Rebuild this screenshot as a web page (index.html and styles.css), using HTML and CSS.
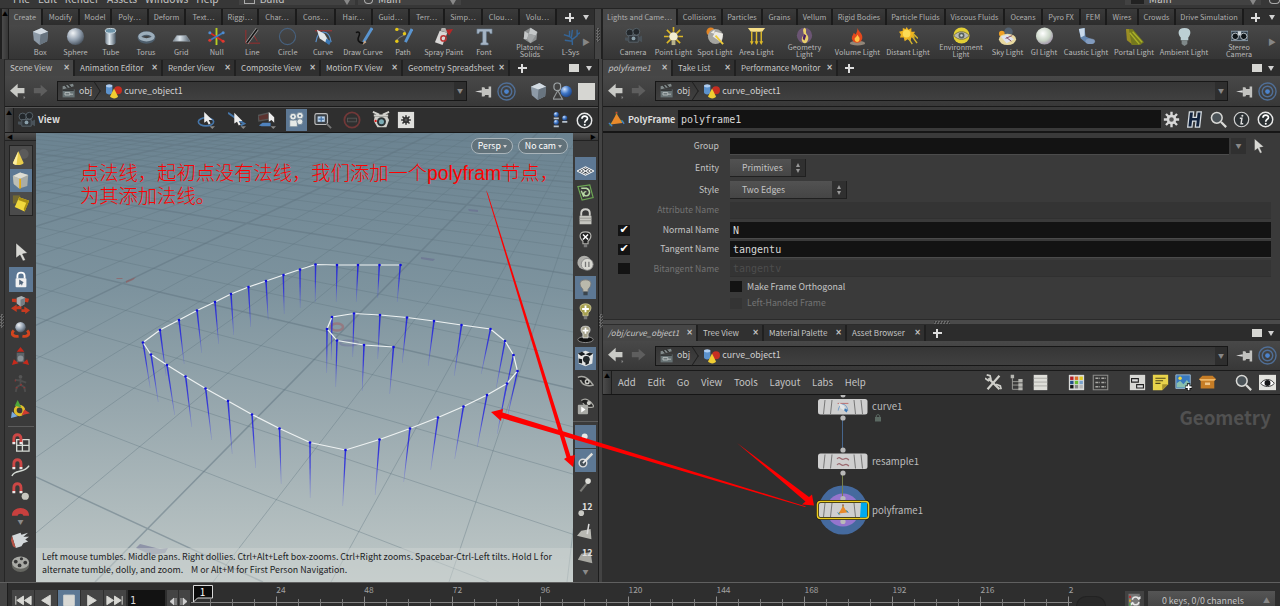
FILE: index.html
```html
<!DOCTYPE html>
<html lang="en">
<head>
<meta charset="utf-8">
<title>Houdini</title>
<link rel="stylesheet" href="styles.css">
</head>
<body>
<svg class="sprite" width="0" height="0">
  <defs>
    <radialGradient id="ball" cx=".35" cy=".3" r=".8"><stop offset="0" stop-color="#f0f3f6"/><stop offset=".5" stop-color="#96a3b2"/><stop offset="1" stop-color="#3c4651"/></radialGradient>
    <linearGradient id="tubeg"><stop offset="0" stop-color="#76838f"/><stop offset=".4" stop-color="#dfe8ee"/><stop offset="1" stop-color="#4d5b68"/></linearGradient>
    <radialGradient id="pearl" cx=".4" cy=".35" r=".7"><stop offset="0" stop-color="#fff"/><stop offset=".6" stop-color="#c9d4c6"/><stop offset="1" stop-color="#9c8fa6"/></radialGradient>
    <radialGradient id="blueball" cx=".35" cy=".3" r=".8"><stop offset="0" stop-color="#cfe3ff"/><stop offset=".5" stop-color="#3d74c4"/><stop offset="1" stop-color="#173a78"/></radialGradient>
    <linearGradient id="fade" x1="0" y1="0" x2="0" y2="1"><stop offset="0" stop-color="#1414e0"/><stop offset=".45" stop-color="#2a2ae0"/><stop offset="1" stop-color="#3c3cf0" stop-opacity=".2"/></linearGradient>
    <marker id="pt" markerWidth="4" markerHeight="4" refX="2" refY="2" markerUnits="userSpaceOnUse"><circle cx="2" cy="2" r="1.350" fill="#1010d8"/></marker>
  </defs>
  <symbol id="box" viewBox="0 0 20 20"><path d="M2 5 11 1l7 4-1 10-8 4-6-5z" fill="#8d9aa7"/><path d="M2 5 11 1l7 4-8 3z" fill="#d3dbe2"/><path d="M10 8l8-3-1 10-8 4z" fill="#68747f"/></symbol>
  <symbol id="sphere" viewBox="0 0 20 20"><circle cx="10" cy="10" r="9" fill="url(#ball)"/></symbol>
  <symbol id="tube" viewBox="0 0 20 20"><path d="M4.500 4v12c0 4 11 4 11 0V4z" fill="url(#tubeg)"/><ellipse cx="10" cy="4" rx="5.500" ry="2.500" fill="#6d93a8" stroke="#d0dbe2"/></symbol>
  <symbol id="torus" viewBox="0 0 20 20"><ellipse cx="10" cy="11" rx="7" ry="4" fill="none" stroke="#4d5d6b" stroke-width="5"/><ellipse cx="10" cy="10" rx="7" ry="3.500" fill="none" stroke="#9daebb" stroke-width="3.500"/></symbol>
  <symbol id="grid" viewBox="0 0 20 20"><path d="M5 9h10l4 6H1z" fill="url(#tubeg)" stroke="#9aa4ad" stroke-width=".5"/></symbol>
  <symbol id="null" viewBox="0 0 20 20"><path d="M10 1v18" stroke="#b8cc22" stroke-width="2"/><path d="M3 6 17 15" stroke="#d42a22" stroke-width="1.800"/><path d="M17 6 3 14" stroke="#3d7cc4" stroke-width="1.800"/><circle cx="3" cy="6" r="1.600" fill="#4f8cd0"/><circle cx="17" cy="6" r="1.600" fill="#4f8cd0"/><circle cx="3" cy="14" r="1.600" fill="#e03a30"/><circle cx="17" cy="15" r="1.600" fill="#e03a30"/></symbol>
  <symbol id="line" viewBox="0 0 20 20"><path d="M3 3v14M3 17h15M11 8l4 7" stroke="#9e2b2b" fill="none"/><path d="M4 17 15 2" stroke="#9b9b9b" stroke-width="3.500"/><path d="M4 17 15 2" stroke="#151515" stroke-width="1.800"/></symbol>
  <symbol id="circle" viewBox="0 0 20 20"><circle cx="10" cy="10" r="8.500" fill="none" stroke="#47617e" stroke-width="1.200"/></symbol>
  <symbol id="curve" viewBox="0 0 20 20"><path d="M1 4h18" stroke="#b03030"/><path d="M2 16C4 2 16 2 18 16" fill="none" stroke="#5a8fc8" stroke-width="1.300"/><path d="M3 3l8 4 4 7-3 2-6-4z" fill="#e3e6e8"/><path d="M13 12l5 3-2 4-4-3z" fill="#3b77b3"/></symbol>
  <symbol id="drawcurve" viewBox="0 0 20 20"><path d="M2 6c3-2 5 0 3 4s0 7 6 7" fill="none" stroke="#101010" stroke-width="1.600"/><path d="M19 1 10 16" stroke="#5a95d0" stroke-width="3"/><path d="M11 14l-2 5 4-3z" fill="#c9a98a"/></symbol>
  <symbol id="path" viewBox="0 0 20 20"><path d="M3 2c6 0 9 2 9 5S4 9 3 15" fill="none" stroke="#777" stroke-width="1.200"/><path d="M19 2 12 16" stroke="#5a95d0" stroke-width="3"/><circle cx="3" cy="2.500" r="1.800" fill="#e6c817"/><circle cx="11" cy="7" r="1.800" fill="#e6c817"/><circle cx="3" cy="15" r="1.800" fill="#e6c817"/></symbol>
  <symbol id="spray" viewBox="0 0 20 20"><path d="M12 3l8-1-4 7z" fill="#b52626"/><path d="M6 4l8 2-5 13-8-3z" fill="#d9d7d6"/><circle cx="10" cy="12" r="2.800" fill="none" stroke="#b33" stroke-width="1.600"/><path d="M8 1h4l2 5-7-2z" fill="#b5b3b1"/></symbol>
  <symbol id="font" viewBox="0 0 20 20"><path d="M2 2h16v5h-2l-1-2h-3v11l2 1v2H6v-2l2-1V5H5L4 7H2z" fill="#a5b4c4" stroke="#5e6f82" stroke-width=".6"/></symbol>
  <symbol id="platonic" viewBox="0 0 20 20"><path d="M10 1l8 5-1 9-7 4-8-5 1-9z" fill="#8c8f90"/><path d="M10 1l-2 7 8 2 2-4zM3 5l5 3-2 6-4 0z" fill="#c4c7c8"/><path d="M8 8l8 2-6 9-4-5z" fill="#a3a6a7"/></symbol>
  <symbol id="lsys" viewBox="0 0 20 20"><path d="M12 19c0-6 0-7-3-9L3 8m6 2V4m3 9 5-4V3m0 5 3-2M12 15l-8-1M11 11l1-8" fill="none" stroke="#356597" stroke-width="1.500"/></symbol>
  <symbol id="cam" viewBox="0 0 20 20"><circle cx="6" cy="6" r="3.800" fill="#22272b" stroke="#59636a"/><circle cx="13" cy="5" r="3.600" fill="#22272b" stroke="#59636a"/><path d="M5 9h10v7H5z" fill="#30363b" stroke="#59636a"/><path d="M15 11l4-2v7l-4-2zM5 11H1v3l4 1z" fill="#495259"/><circle cx="10" cy="12" r="2" fill="#8ba0aa"/></symbol>
  <symbol id="pointlight" viewBox="0 0 20 20"><path d="M10 0v5M0 10h5M15 10h5M3 3l4 4M17 3l-4 4M3 17l4-4M17 17l-4-4" stroke="#dcb828" stroke-width="1.700"/><circle cx="10" cy="10" r="4.500" fill="#f3efcf"/><path d="M8 14h4v5H8z" fill="#b9b38b"/></symbol>
  <symbol id="spotlight" viewBox="0 0 20 20"><circle cx="5" cy="5" r="4.500" fill="#e58523"/><circle cx="10" cy="10" r="8" fill="#a5a5a0"/><path d="M10 5l8 2-2 9-9-6zM5 6l4-3 0 4z" fill="#eceae4"/><path d="M10 9l8 9" stroke="#efcd3c" stroke-width="2"/></symbol>
  <symbol id="arealight" viewBox="0 0 20 20"><path d="M1 1h18l-3 4H4z" fill="#f7df87"/><path d="M5 5v12M10 5v13M15 5v12" stroke="#dcb828" stroke-width="1.500"/><path d="M3 15h4l-2 4zM8 15h4l-2 4zM13 15h4l-2 4z" fill="#dcb828"/></symbol>
  <symbol id="geolight" viewBox="0 0 20 20"><circle cx="10" cy="10" r="9" fill="#6b5574"/><path d="M10 1c4 2 0 5 3 8s1 9-2 10-6-4-3-8-2-7 2-10z" fill="#e9cf6a"/><path d="M9 8l3 2-2 6-2-2z" fill="#4b1f66"/></symbol>
  <symbol id="fire" viewBox="0 0 20 20"><ellipse cx="10" cy="17" rx="8" ry="2.500" fill="#c9b6a0" opacity=".6"/><path d="M10 1c1 4 6 6 5 11-1 6-10 6-11 0 0-3 2-4 2-6l2 2c1-2 2-4 2-7z" fill="#e4491d"/><path d="M10 8c1 3 3 3 2 6-1 3-5 2-5-1 0-2 2-2 3-5z" fill="#ffc246"/></symbol>
  <symbol id="distant" viewBox="0 0 20 20"><path d="M8 0l2 3 3-2 0 4 4 0-2 3 2 3-4 0-1 4-3-2-3 2-1-4-4 0 1-3-2-3 4-1 0-3 3 1z" fill="#eeb421"/><circle cx="8" cy="7" r="4" fill="#fbdc55"/><path d="M10 12l4 6M14 10l5 7M15 7l5 5" stroke="#d3b32c" stroke-width="1.500"/></symbol>
  <symbol id="env" viewBox="0 0 20 20"><circle cx="10" cy="10" r="9.500" fill="#e3cf35"/><path d="M1 10c5-6 13-6 18 0-5 6-13 6-18 0z" fill="#b9b9b2" stroke="#6e6a45"/><circle cx="10" cy="10" r="3.500" fill="#56605c"/><circle cx="10" cy="10" r="1.500" fill="#ced6d8"/></symbol>
  <symbol id="sky" viewBox="0 0 20 20"><circle cx="11" cy="5" r="4.500" fill="#53606e"/><circle cx="4" cy="7" r="3" fill="#f0a024"/><ellipse cx="10" cy="13" rx="9" ry="6" fill="#e8d9a0"/><path d="M3 10l7-2 7 5-8 4z" fill="#dfe3ee"/><path d="M8 12l7-3M9 11l5 4" stroke="#7f4860"/></symbol>
  <symbol id="gi" viewBox="0 0 20 20"><circle cx="10" cy="9.500" r="9" fill="url(#pearl)"/></symbol>
  <symbol id="caustic" viewBox="0 0 20 20"><path d="M2 2l6-1 1 9 9 4c2 4-4 5-8 3l-6-5z" fill="#6587b0"/><path d="M2 2l6-1 0 8-4 2z" fill="#c8d9ea"/><ellipse cx="14" cy="15" rx="5" ry="3" fill="#8fa5c6" opacity=".7"/></symbol>
  <symbol id="portal" viewBox="0 0 20 20"><path d="M1 2l7 0 12 14-4 3H7z" fill="#74781e"/><path d="M1 2l3 0 3 16-5-4z" fill="#9a8d24"/><path d="M8 5l10 11M5 6l10 12" stroke="#a8b029" stroke-width="1.500"/></symbol>
  <symbol id="bulb" viewBox="0 0 20 20"><path d="M10 1c8 0 7 7 4 10v3H6v-3C3 8 2 1 10 1z" fill="#bccfd3"/><path d="M7 14h6v4l-3 2-3-2z" fill="#7f8889"/></symbol>
  <symbol id="stereo" viewBox="0 0 20 20"><path d="M0 5h20v11H0z" fill="#2e3c48" stroke="#92a4b4"/><path d="M8 5h4v5H8z" fill="#ccd4da"/><circle cx="5" cy="11" r="3.800" fill="#0f1418" stroke="#cfd6dc"/><circle cx="15" cy="11" r="3.800" fill="#0f1418" stroke="#cfd6dc"/></symbol>

  <symbol id="back" viewBox="0 0 20 20"><path d="M0 9 9 1v5h8v6H9v5z" fill="#c9cac6"/><path d="M16 15l2 2-2 2z" fill="#888"/></symbol>
  <symbol id="fwd" viewBox="0 0 20 20"><path d="M17 9 9 2v4H1v6h8v4z" fill="#5e5e5e"/></symbol>
  <symbol id="clap" viewBox="0 0 20 20"><path d="M2 8h15v10H2z" fill="#677274"/><path d="M2 4l13-3 1 3L2 8z" fill="#80898a"/><path d="M5 3l3 3M9 2l3 3M2 9h14" stroke="#252525" stroke-width="1.500"/><path d="M5 12h6v3H5zM11 14h4" stroke="#c3c9c9" fill="none"/></symbol>
  <symbol id="obj" viewBox="0 0 20 20"><path d="M0 3v9c0 3 8 3 8 0V3z" fill="#5c92cc"/><ellipse cx="4" cy="3.500" rx="4" ry="2" fill="#afcdf0"/><circle cx="15" cy="9" r="5" fill="#c52e22"/><path d="M10 7l5 10c-1 3-8 3-10 0z" fill="#f1cd32"/></symbol>
  <symbol id="pin" viewBox="0 0 20 20"><path d="M0 10l8-1.500v3z" fill="#d9d9d9"/><path d="M8 5h3l1 2h4V4h3v13h-3v-3h-4l-1 2H8z" fill="#c2c2bf"/></symbol>
  <symbol id="target" viewBox="0 0 20 20"><g fill="none" stroke="#506f97" stroke-width="1.500"><circle cx="10" cy="10" r="9"/><circle cx="10" cy="10" r="5.500"/></g><circle cx="10" cy="10" r="2.500" fill="#4c83cc"/></symbol>
  <symbol id="duo" viewBox="0 0 20 20"><rect x="1" y="1" width="7" height="8" rx="3" fill="none" stroke="#a2a8aa" stroke-width="1.200"/><path d="M5 9l5 9H0z" fill="none" stroke="#94989a" stroke-width="1.200"/><circle cx="14" cy="10" r="6" fill="url(#blueball)"/></symbol>
  <symbol id="cone" viewBox="0 0 20 20"><circle cx="13" cy="6" r="5.500" fill="#5b5b5b"/><path d="M7 3l6 13c-2 3-10 3-12 0z" fill="#e9cd4c"/><path d="M7 3L5 18c-2 0-4-1-4-2z" fill="#fff0a1"/></symbol>
  <symbol id="geo" viewBox="0 0 20 20"><path d="M1 5l8-4 9 3-1 12-9 3-6-5z" fill="#a9aca6"/><path d="M1 5l8-4 9 3-9 4z" fill="#deddd4"/><path d="M1 5l8 3-1 11-6-5z" fill="#bdbeb5"/><path d="M9 8v11" stroke="#e4ac13" stroke-width="2"/></symbol>
  <symbol id="ycube" viewBox="0 0 20 20"><path d="M1 1h8v9H1z" fill="#97831c" opacity=".55"/><path d="M8 3l11 4-5 12-11-5z" fill="#f0d83c"/><path d="M8 3l11 4-1 3-11-4zM18 10l-4 9-1-3 3-7z" fill="#a98f12"/></symbol>
  <symbol id="cursor" viewBox="0 0 20 20"><path d="M5 1v15l4-3 3 6 2.500-1-3-6 5-1z" fill="#d8d8d4" stroke="#222" stroke-width=".4"/></symbol>
  <symbol id="lock" viewBox="0 0 20 20"><path d="M6 9V6c0-5 8-5 8 0v3" fill="none" stroke="#fff" stroke-width="2"/><rect x="4" y="8.500" width="12" height="10" rx="1" fill="#f1f1f1"/><path d="M8 10v6l2-1 1 2 1-3 1-1z" fill="#53677d"/></symbol>
  <symbol id="move" viewBox="0 0 20 20"><path d="M0 14l6-4v2l5-1v4H6v3zM11 15h3v-3l6 4-5 4v-2h-4zM1 4l5 0v4L1 7zM14 3l5 1-1 4-4-1z" fill="#c73a20"/><path d="M6 3l5-2 4 2-1 7-4 2-4-3z" fill="#aab0b3"/><path d="M10 5l5-2-1 7-4 2z" fill="#767e84"/></symbol>
  <symbol id="rot" viewBox="0 0 20 20"><path d="M3 10C-1 14 3 17 8 16M17 10c4 4 0 7-5 6" fill="none" stroke="#d2451f" stroke-width="3"/><circle cx="10" cy="6.500" r="5.500" fill="url(#ball)"/></symbol>
  <symbol id="scale" viewBox="0 0 20 20"><path d="M10 0l4 5h-8zM1 19l2-6 5 4zM19 19l-2-6-5 4z" fill="#c6291b"/><path d="M6 6h8v10H6z" fill="#5d6468"/><circle cx="10" cy="12" r="3" fill="#899195"/></symbol>
  <symbol id="pose" viewBox="0 0 20 20"><circle cx="10" cy="3" r="2" fill="#555"/><path d="M10 5v6M4 6l6 1 6 2M10 11l-4 3-1 5M10 11l4 3 1 5" stroke="#4d4d4d" fill="none" stroke-width="2"/><path d="M4 7h1M10 11l1 1M6 14v1M14 14v1" stroke="#933" stroke-width="2"/></symbol>
  <symbol id="handle" viewBox="0 0 20 20"><circle cx="9" cy="11" r="4.500" fill="none" stroke="#e1bd2b" stroke-width="3"/><path d="M7 0l4 8-7-2z" fill="#4fa83b"/><path d="M20 14l-9 2 3-6z" fill="#cf3b30"/><path d="M0 19l1-7 6 5z" fill="#79a9db"/></symbol>
  <symbol id="mag" viewBox="0 0 20 20"><path d="M4 14V7c0-7 10-7 10 0v7" fill="none" stroke="#cd4745" stroke-width="4"/><path d="M2 12h4v3H2zM12 12h4v3h-4z" fill="#e8e8e8"/></symbol>
  <symbol id="hand" viewBox="0 0 20 20"><path d="M1 6l9-3 1 2 7-2-5 4 6 0-4 3 3 2-5 2-2 3-6 2z" fill="#d3d8da"/><path d="M1 6l4 13-3-2-2-6z" fill="#b95446"/></symbol>
  <symbol id="reel" viewBox="0 0 20 20"><ellipse cx="10" cy="12" rx="9" ry="7" fill="#656661"/><ellipse cx="10" cy="9" rx="9" ry="6.500" fill="#a9aaa5"/><g fill="#373737"><circle cx="5" cy="8" r="2"/><circle cx="11" cy="5" r="1.700"/><circle cx="15" cy="9" r="2"/><circle cx="9" cy="12" r="2"/></g></symbol>

  <symbol id="orbit" viewBox="0 0 20 20"><ellipse cx="10" cy="12" rx="8.500" ry="4.500" fill="none" stroke="#4676aa" stroke-width="1.800"/><path d="M8 1v12l3-2 2 4 2-1-2-4h4z" fill="#eee"/><path d="M14 17h6l-3 3z" fill="#888"/></symbol>
  <symbol id="pan" viewBox="0 0 20 20"><path d="M0 2l16 11M13 11l5 3-4 2" fill="none" stroke="#4676aa" stroke-width="2.200"/><path d="M7 2v12l3-2 2 4 2-1-2-4h4z" fill="#eee"/><path d="M14 17h6l-3 3z" fill="#888"/></symbol>
  <symbol id="dolly" viewBox="0 0 20 20"><path d="M0 5l12-3v7L1 11z" fill="#5c3330" stroke="#555" stroke-width="1.500"/><path d="M1 16l4-3h9v4H4z" fill="#4f82bd"/><path d="M12 1v11l3-2 3 3V7z" fill="#eee"/><path d="M14 17h6l-3 3z" fill="#888"/></symbol>
  <symbol id="scene" viewBox="0 0 20 20"><g fill="#e6e9e7" stroke="#6c8194"><path d="M2 10h9v8H2z"/><circle cx="6" cy="6" r="4"/><circle cx="14" cy="5" r="4"/><circle cx="14" cy="12" r="3.500"/></g><circle cx="6" cy="6" r="1.300" fill="#5d7894"/><circle cx="14" cy="5" r="1.300" fill="#5d7894"/></symbol>
  <symbol id="zoomr" viewBox="0 0 20 20"><rect x="1" y="3" width="14" height="12" rx="2" fill="#3a3f44" stroke="#bbb" stroke-width="1.300"/><rect x="4" y="6" width="8" height="6" fill="#b9d2ec"/><path d="M5 9h6M8 6v6" stroke="#416ea0" stroke-width="1.300"/><path d="M14 14l5 5" stroke="#777" stroke-width="2"/></symbol>
  <symbol id="noentry" viewBox="0 0 20 20"><circle cx="10" cy="10" r="8.500" fill="none" stroke="#713838" stroke-width="2"/><rect x="5" y="8" width="10" height="4" fill="#333" stroke="#555"/></symbol>
  <symbol id="shot" viewBox="0 0 20 20"><path d="M3 6h14l2 4-3 8H6l-4-7z" fill="#d1d1cc"/><path d="M1 1l7 3M19 1l-7 3M2 5h16" stroke="#d1d1cc" stroke-width="2"/><circle cx="10.500" cy="12" r="5" fill="#2d3436"/><circle cx="10.500" cy="12" r="2.800" fill="#7babb4"/><circle cx="4" cy="11" r="1.300" fill="#d22"/></symbol>
  <symbol id="gear" viewBox="0 0 20 20"><path d="M10 1v18M1 10h18M3.500 3.500l13 13M16.500 3.500l-13 13" stroke="currentColor" stroke-width="2.800"/><circle cx="10" cy="10" r="4.200" fill="#555" stroke="currentColor" stroke-width="3"/></symbol>
  <symbol id="gearbox" viewBox="0 0 20 20"><path d="M1 1h18v18H1z" fill="#dfdfdc"/><g color="#333"><use href="#gear" x="4" y="4" width="12" height="12"/></g></symbol>
  <symbol id="people" viewBox="0 0 20 20"><g fill="url(#blueball)"><circle cx="5" cy="3" r="3"/><circle cx="5" cy="12" r="3"/><circle cx="15" cy="7" r="3"/></g><path d="M2 7.500h6M2 17h6M12 11.500h6" stroke="#b8c2cc" stroke-width="2"/></symbol>
  <symbol id="help" viewBox="0 0 20 20"><circle cx="10" cy="10" r="8.500" fill="#2b3033" stroke="#e8e8e8" stroke-width="1.700"/><path d="M7 8c0-4 6.500-4 6.500-.5C13.500 10 10.300 9.500 10.300 12.500" fill="none" stroke="#fff" stroke-width="2"/><circle cx="10.300" cy="15" r="1.200" fill="#fff"/></symbol>
  <symbol id="info" viewBox="0 0 20 20"><circle cx="10" cy="10" r="8.500" fill="#2b3033" stroke="#d0d0d0" stroke-width="1.400"/><path d="M8 8.500h2.500L9.500 15H12" fill="none" stroke="#ddd" stroke-width="1.700"/><circle cx="11" cy="5.500" r="1.200" fill="#ddd"/></symbol>
  <symbol id="hou" viewBox="0 0 20 20"><path d="M4 1h5L8.300 7.500h4L13 1h5l-2 18h-5l.8-7h-4L7 19H2z" fill="#12233e" stroke="#d5dbe0" stroke-width="1.500"/></symbol>
  <symbol id="search" viewBox="0 0 20 20"><circle cx="8" cy="8" r="6.300" fill="#4b5358" stroke="#d9d9d6" stroke-width="1.800"/><path d="M13 13l6 6" stroke="#d9d9d6" stroke-width="2.600"/></symbol>
  <symbol id="poly" viewBox="0 0 20 20"><path d="M10 1v8L2 17M10 9l8 4" stroke="#3e9d37" stroke-width="1.800" fill="none"/><path d="M10 3l7 11-14 2z" fill="#e8892b"/><path d="M1 14l4 4M16 11l3 4" stroke="#467fca" stroke-width="1.500"/><path d="M9 2h2" stroke="#d33" stroke-width="2"/></symbol>

  <symbol id="cplane" viewBox="0 0 20 20"><path d="M0 13l10-5 10 5-10 5z" fill="#222b33" stroke="#fff" stroke-width="1.200"/><path d="M4 13l6-3 6 3-6 3zM7 11.500l6 3M13 11.500l-6 3" fill="none" stroke="#fff" stroke-width="1.100"/></symbol>
  <symbol id="green" viewBox="0 0 20 20"><path d="M1 3l14-2 4 15-13 3z" fill="none" stroke="#6ca654" stroke-width="1.400"/><path d="M5 5l6 0c5 2 5 8 0 9-4 0-4-5 0-5M5 8l3 7" fill="none" stroke="#b6d8a4" stroke-width="1.700"/></symbol>
  <symbol id="padlock" viewBox="0 0 20 20"><path d="M5 9V6c0-6 10-6 10 0v3" fill="none" stroke="#cfcfca" stroke-width="2.200"/><path d="M3 9h14v10H3z" fill="#c6c6c0"/><path d="M3 12h14M3 15h14" stroke="#92928d"/></symbol>
  <symbol id="bulbx" viewBox="0 0 20 20"><path d="M10 1c9 0 7 8 3 11v3H7v-3C3 9 1 1 10 1z" fill="#222" stroke="#b4b4b0" stroke-width="1.300"/><path d="M7 4l6 6M13 4l-6 6" stroke="#fff" stroke-width="1.700"/><path d="M8 15h4v4H8z" fill="#777"/></symbol>
  <symbol id="shade" viewBox="0 0 20 20"><circle cx="8.500" cy="9" r="8" fill="#aeaeaa"/><circle cx="12" cy="11" r="7" fill="#d8d8d2" stroke="#888"/><path d="M10 8v6M14 8v6" stroke="#777" stroke-width="1.500"/></symbol>
  <symbol id="bulbw" viewBox="0 0 20 20"><path d="M10 1c9 0 7 8 3 11v3H7v-3C3 9 1 1 10 1z" fill="#bab9ac" stroke="#777"/><path d="M7.500 15h5v4h-5z" fill="#3b454d"/></symbol>
  <symbol id="bulbp" viewBox="0 0 20 20"><path d="M10 1c9 0 7 8 3 11v3H7v-3C3 9 1 1 10 1z" fill="#a6a04f" stroke="#d4cf9c"/><path d="M10 3v8M6 7h8" stroke="#fff" stroke-width="2.200"/><path d="M8 15h4v4H8z" fill="#777"/></symbol>
  <symbol id="bulbs" viewBox="0 0 20 20"><ellipse cx="10" cy="16" rx="9" ry="3.500" fill="#111" stroke="#999"/><path d="M10 0c7 0 6 7 3 9v5H7V9C4 7 3 0 10 0z" fill="#a5a18a" stroke="#ddd"/><path d="M10 2v7M6.500 5.500h7" stroke="#fff" stroke-width="2"/></symbol>
  <symbol id="checker" viewBox="0 0 20 20"><path d="M1 4l9-3 9 3-1 12-8 3-8-3z" fill="#e3e5e4"/><path d="M1 4l5-2 4 3-5 2zM10 5l5-2 4 1-4 3zM2 10l4 1v5l-4-1zM10 11l4-1v6l-4 2z" fill="#181d20"/><circle cx="11" cy="11" r="4" fill="#22282b"/></symbol>
  <symbol id="eye" viewBox="0 0 20 20"><path d="M1 4c6-3 12 0 18 9-6 2-13 0-15-6" fill="#222" stroke="#a7a7a2" stroke-width="1.800"/><circle cx="12" cy="9" r="3" fill="#c9c9c4"/><circle cx="12" cy="9" r="1.300" fill="#111"/></symbol>
  <symbol id="eyep" viewBox="0 0 20 20"><path d="M5 3c5-4 10-1 15 7-5 2-10 1-13-4" fill="#222" stroke="#a7a7a2" stroke-width="1.500"/><circle cx="14" cy="6" r="2.500" fill="#c9c9c4"/><rect x="1" y="8" width="12" height="11" rx="1" fill="#a9aaa6"/><path d="M5 10l5 3.500-5 3.500z" fill="#fff"/></symbol>
  <symbol id="dot" viewBox="0 0 20 20"><circle cx="9" cy="10" r="3.500" fill="#e9e9e6"/></symbol>
  <symbol id="vec" viewBox="0 0 20 20"><path d="M7 13L18 2" stroke="#e0e0db" stroke-width="2.800"/><circle cx="7" cy="13" r="4.500" fill="#48525a" stroke="#ddd" stroke-width="1.700"/><path d="M7 13l4-4" stroke="#eee" stroke-width="2"/></symbol>
  <symbol id="vec2" viewBox="0 0 20 20"><path d="M13 7L4 18" stroke="#7c7c78" stroke-width="2.500"/><circle cx="13" cy="6" r="3.300" fill="#deded9"/></symbol>
  <symbol id="num" viewBox="0 0 20 20"><text x="6" y="12" class="icon-num">12</text><circle cx="5" cy="15.500" r="3.300" fill="#c9c9c4"/></symbol>
  <symbol id="face" viewBox="0 0 20 20"><path d="M5 9l11-2 1 12L0 15z" fill="#b8b8b2"/><path d="M12 13l2-12" stroke="#ddd" stroke-width="1.800"/></symbol>
  <symbol id="facenum" viewBox="0 0 20 20"><path d="M5 8l11-2 2 13L1 15z" fill="#a8a8a2"/><text x="6" y="11" class="icon-num">12</text></symbol>

  <symbol id="tools" viewBox="0 0 20 20"><path d="M4 5l13 13M17 2L3 18" stroke="#cfcfca" stroke-width="2.600"/><path d="M2 1l4 1 1 4-3 2-4-3M13 12l5 2 1 4" fill="none" stroke="#cfcfca" stroke-width="2"/></symbol>
  <symbol id="tree" viewBox="0 0 20 20"><path d="M4 5v13h8M4 9h8M4 13h8" fill="none" stroke="#a8a8a3"/><path d="M2 1h4v4H2zM11 6h5v4h-5zM11 11h5v4h-5zM11 15.500h5V19h-5z" fill="#b7b7b2"/></symbol>
  <symbol id="list" viewBox="0 0 20 20"><path d="M2 1h16v18H2z" fill="#deded9"/><path d="M2 5h16M2 9.500h16M2 14h16" stroke="#a3a39f"/></symbol>
  <symbol id="palette" viewBox="0 0 20 20"><path d="M1 1h18v18H1z" fill="#d9dbda"/><g stroke-width="4"><path d="M2.500 5h4" stroke="#b51f26"/><path d="M8 5h4" stroke="#dc6b23"/><path d="M13.500 5h4" stroke="#e0cb23"/><path d="M2.500 10h4" stroke="#264f89"/><path d="M8 10h4" stroke="#69bb32"/><path d="M13.500 10h4" stroke="#79a2cc"/><path d="M2.500 15h4" stroke="#161616"/><path d="M8 15h4" stroke="#858585"/><path d="M13.500 15h4" stroke="#b5b5b5"/></g></symbol>
  <symbol id="flags" viewBox="0 0 20 20"><path d="M1.500 1.500h17v17h-17z" fill="#383838" stroke="#8d8d8a" stroke-width="1.300"/><path d="M4 5h5M11 5h5M4 10h5M11 10h5M4 15h5M11 15h5" stroke="#aaaaa6" stroke-width="2" stroke-dasharray="3.500 .7"/></symbol>
  <symbol id="layout" viewBox="0 0 20 20"><path d="M1 1h18v18H1z" fill="#d8d8d4"/><path d="M3 5.500h8v4H3zM9 12.500h8v4H9z" fill="#ddd" stroke="#222" stroke-width="1.300"/></symbol>
  <symbol id="note" viewBox="0 0 20 20"><path d="M1 1h18v11l-7 7H1z" fill="#e8d34b"/><path d="M4 5h12M4 8h9M4 11h6" stroke="#4f4718" stroke-width="1.300"/><path d="M12 19v-7h7z" fill="#a7922c"/></symbol>
  <symbol id="image" viewBox="0 0 20 20"><path d="M1 1h17v16H1z" fill="#3979bd" stroke="#a7c1d5"/><path d="M2 16V11l4-3 4 4 4-5 4 5v4z" fill="#8abfae"/><circle cx="6" cy="5" r="2" fill="#f1d83c"/><path d="M16 11v9M12 15.500h8" stroke="#111" stroke-width="4"/><path d="M16 12v7M12.500 15.500h7" stroke="#fff" stroke-width="2"/></symbol>
  <symbol id="crate" viewBox="0 0 20 20"><path d="M0 6l4-4h12l4 4-2 2v9H2V8z" fill="#c67d26"/><path d="M0 6h20l-2 2H2z" fill="#efb766"/><path d="M7 10h6v3H7z" fill="#efc486"/></symbol>
  <symbol id="eyebox" viewBox="0 0 20 20"><path d="M0 1h20v18H0z" fill="#e4e4df"/><path d="M2 11c4-6 12-6 16 0-4 5-12 5-16 0z" fill="#fff" stroke="#222"/><circle cx="10" cy="10.500" r="3.500" fill="#161616"/></symbol>
  <symbol id="key" viewBox="0 0 20 20"><path d="M2 1h15v18H2z" fill="#767676"/><path d="M3 5h2" stroke="#c22" stroke-width="3"/><path d="M3 10h2" stroke="#da2" stroke-width="3"/><path d="M3 15h2" stroke="#3a3" stroke-width="3"/><path d="M7 9c1-5 8-5 9 0M16 12c-1 5-8 5-9 0" fill="none" stroke="#e5e5e5" stroke-width="2"/><path d="M13 8h5V4zM10 13H5v4z" fill="#e5e5e5"/></symbol>
</svg>

<header class="menubar">
  <span>File</span><span>Edit</span><span>Render</span><span>Assets</span><span>Windows</span><span>Help</span>
  <div class="desk desk-a"><i class="desk-icon"></i><b>Build</b><em class="down"></em></div>
  <div class="desk desk-b"><i class="ring"></i><b>Main</b><em class="down"></em></div>
  <div class="desk desk-c"><i class="slab"></i><b>Main</b><em class="down"></em></div>
  <i class="ring help-ring"></i>
</header>

<section class="shelves">
  <div class="shelf">
    <div class="collapse">▲</div>
    <div class="shelf-main">
      <nav class="shelf-tabs tabs-left"><span class="on">Create</span><span>Modify</span><span>Model</span><span>Poly…</span><span>Deform</span><span>Text…</span><span>Riggi…</span><span>Char…</span><span>Cons…</span><span>Hair…</span><span>Guid…</span><span>Terr…</span><span>Simp…</span><span>Clou…</span><span>Volu…</span><b><i class="plus"></i><i class="down"></i></b></nav>
      <div class="shelf-tools tools-left">
        <a><svg><use href="#box"/></svg>Box</a><a><svg><use href="#sphere"/></svg>Sphere</a><a><svg><use href="#tube"/></svg>Tube</a><a><svg><use href="#torus"/></svg>Torus</a><a><svg><use href="#grid"/></svg>Grid</a><a><svg><use href="#null"/></svg>Null</a><a><svg><use href="#line"/></svg>Line</a><a><svg><use href="#circle"/></svg>Circle</a><a><svg><use href="#curve"/></svg>Curve</a><a><svg><use href="#drawcurve"/></svg>Draw Curve</a><a><svg><use href="#path"/></svg>Path</a><a><svg><use href="#spray"/></svg>Spray Paint</a><a><svg><use href="#font"/></svg>Font</a><a class="two"><svg><use href="#platonic"/></svg>Platonic<br>Solids</a><a><svg><use href="#lsys"/></svg>L-Sys</a><i class="more">▶</i>
      </div>
    </div>
    <div class="shelf-grip"><i class="dots"></i></div>
  </div>
  <div class="shelf">
    <div class="shelf-main">
      <nav class="shelf-tabs tabs-right"><span class="on">Lights and Came…</span><span>Collisions</span><span>Particles</span><span>Grains</span><span>Vellum</span><span>Rigid Bodies</span><span>Particle Fluids</span><span>Viscous Fluids</span><span>Oceans</span><span>Pyro FX</span><span>FEM</span><span>Wires</span><span>Crowds</span><span>Drive Simulation</span><b><i class="plus"></i><i class="down"></i></b></nav>
      <div class="shelf-tools tools-right">
        <a><svg><use href="#cam"/></svg>Camera</a><a><svg><use href="#pointlight"/></svg>Point Light</a><a><svg><use href="#spotlight"/></svg>Spot Light</a><a><svg><use href="#arealight"/></svg>Area Light</a><a class="two"><svg><use href="#geolight"/></svg>Geometry<br>Light</a><a><svg><use href="#fire"/></svg>Volume Light</a><a><svg><use href="#distant"/></svg>Distant Light</a><a class="two"><svg><use href="#env"/></svg>Environment<br>Light</a><a><svg><use href="#sky"/></svg>Sky Light</a><a><svg><use href="#gi"/></svg>GI Light</a><a><svg><use href="#caustic"/></svg>Caustic Light</a><a><svg><use href="#portal"/></svg>Portal Light</a><a><svg><use href="#bulb"/></svg>Ambient Light</a><a class="two"><svg><use href="#stereo"/></svg>Stereo<br>Camera</a><i class="more">▶</i>
      </div>
    </div>
  </div>
</section>

<main class="work">
  <div class="edge"><i class="dots"></i></div>
  <section class="pane scene-pane">
    <nav class="tabs scene-tabs"><span class="on">Scene View<i>×</i></span><span>Animation Editor<i>×</i></span><span>Render View<i>×</i></span><span>Composite View<i>×</i></span><span>Motion FX View<i>×</i></span><span>Geometry Spreadsheet<i>×</i></span><b class="plus"></b><u></u><b class="down"></b></nav>
    <div class="pathbar">
      <svg class="nav"><use href="#back"/></svg><svg class="nav"><use href="#fwd"/></svg>
      <div class="path"><svg><use href="#clap"/></svg>obj<i class="chev"></i><svg><use href="#obj"/></svg>curve_object1<em>▼</em></div>
      <svg class="i17"><use href="#pin"/></svg><svg class="i19"><use href="#target"/></svg>
      <svg class="i19 gap"><use href="#box"/></svg><svg class="i19"><use href="#duo"/></svg><i class="white"></i>
    </div>
    <div class="viewbar">
      <div class="collapse">▲</div>
      <svg class="i19"><use href="#cam"/></svg><strong>View</strong>
      <div class="vb-tools"><svg><use href="#orbit"/></svg><svg><use href="#pan"/></svg><svg><use href="#dolly"/></svg><svg class="active"><use href="#scene"/></svg><svg><use href="#zoomr"/></svg><svg class="ne"><use href="#noentry"/></svg><svg><use href="#shot"/></svg><svg><use href="#gearbox"/></svg></div>
      <div class="vb-end"><svg><use href="#people"/></svg><svg><use href="#help"/></svg></div>
    </div>
    <div class="view-area">
      <aside class="toolcol left-tools">
        <div class="colhead">◀</div>
        <div class="seltypes"><svg><use href="#cone"/></svg><svg class="active"><use href="#geo"/></svg><svg><use href="#ycube"/></svg></div>
        <svg class="t-cursor"><use href="#cursor"/></svg>
        <svg class="active t-lock"><use href="#lock"/></svg>
        <svg><use href="#move"/></svg><svg><use href="#rot"/></svg><svg><use href="#scale"/></svg><svg><use href="#pose"/></svg><svg><use href="#handle"/></svg>
        <hr>
        <svg class="snap" viewBox="0 0 20 20"><path d="M6 7h13v12H6zM12 7v12M6 13h13" fill="none" stroke="#d5dbd5" stroke-width="1.400"/><use href="#mag" width="15" height="16"/></svg>
        <svg class="snap" viewBox="0 0 20 20"><path d="M1 19c3-8 13-2 18-11" fill="none" stroke="#d5dbd5" stroke-width="1.500"/><use href="#mag" width="15" height="16"/></svg>
        <svg class="snap" viewBox="0 0 20 20"><circle cx="15" cy="15" r="3.800" fill="#c6c6bf"/><use href="#mag" width="15" height="16"/></svg>
        <svg class="snap half" viewBox="0 0 20 9"><path d="M1 9C1-2 19-2 19 9h-6c0-3-6-3-6 0z" fill="#c8403e"/></svg>
        <i class="tri">▼</i>
        <svg class="t-hand"><use href="#hand"/></svg><svg class="t-reel"><use href="#reel"/></svg>
      </aside>
      <div class="viewport">
        <svg class="scene" viewBox="36 133 537 449">
          <g fill="none" stroke="#5f7480">
            <path opacity=".42" stroke-width=".9" d="M632 37 567 582M632 37 449 582M632 37 331 582M632 37 213 582M632 37-23 582M632 37-141 582M632 37-259 582M632 37-377 582M632 37-613 582M632 37-731 582M632 37-849 582M632 37-967 582M632 37-1203 582M632 37-1321 582M632 37-1439 582M632 37-1557 582M632 37-1793 582M632 37-1911 582M632 37-2029 582M632 37-2147 582"/>
            <path opacity=".42" stroke-width=".9" d="M-903 42.600 489 582M-903 42.600 716 582M-903 42.600 942 582M-903 42.600 1169 582M-903 42.600 1621 582M-903 42.600 1848 582M-903 42.600 2074 582M-903 42.600 2301 582M-903 42.600 2753 582M-903 42.600 2980 582M-903 42.600 3206 582M-903 42.600 3433 582M-903 42.600 3885 582M-903 42.600 4112 582M-903 42.600 4338 582M-903 42.600 4565 582M-903 42.600 5017 582M-903 42.600 5244 582M-903 42.600 5470 582M-903 42.600 5697 582M-903 42.600 6149 582M-903 42.600 6602 582"/>
            <path opacity=".5" stroke-width="1.500" d="M632 37 95 582M632 37-495 582M632 37-1085 582M632 37-1675 582M-903 42.600 263 582M-903 42.600 1395 582M-903 42.600 2527 582M-903 42.600 3659 582M-903 42.600 4791 582"/>
          </g>
          <g fill="#66668e" opacity=".5"><path d="M136 548l4-4 20 5 8-1-3 5-14 2zM421 257l14 2-2 2-12-2zM468 209l10 1v2l-9-1z"/><path d="M116 278l7 0-1 1-5 0zM126 281l10-4-3 3-7 3z" fill="#9c4c4c"/></g>
          <ellipse cx="337" cy="327" rx="6" ry="3.500" fill="none" stroke="#a45c62" stroke-width="2.500" opacity=".5"/>
          <ellipse cx="349" cy="343" rx="9" ry="2.500" fill="none" stroke="#6a6a9c" stroke-width="2" opacity=".4"/>
          <g fill="url(#fade)" opacity=".82"><path d="M399.500 265h1.600L397.500 302h-.6z"/><path d="M378.500 265h1.600L378 298h-.6z"/><path d="M357.200 265h1.600L356.500 302h-.6z"/><path d="M336.200 265h1.600L336.500 302h-.6z"/><path d="M314.800 264h1.600L315.500 302h-.6z"/><path d="M299.200 269h1.600L300.500 308h-.6z"/><path d="M282.500 275h1.600L284.500 314h-.6z"/><path d="M265.200 281h1.600L268.500 320h-.6z"/><path d="M247.700 287h1.600L251 327h-.6z"/><path d="M230.200 294h1.600L234 335h-.6z"/><path d="M214.200 302h1.600L219 344h-.6z"/><path d="M196.200 310h1.600L202 353h-.6z"/><path d="M178.200 320h1.600L184.500 364h-.6z"/><path d="M159.200 330h1.600L166.500 376h-.6z"/><path d="M142.200 342h1.600L150.500 388h-.6z"/><path d="M150.200 354h1.600L158.500 402h-.6z"/><path d="M166.200 365h1.600L175 415h-.6z"/><path d="M184.800 376h1.600L192 427h-.6z"/><path d="M204.800 388h1.600L212 440h-.6z"/><path d="M227.200 401h1.600L232.500 454h-.6z"/><path d="M251.200 414h1.600L256 468h-.6z"/><path d="M278.700 428h1.600L281.500 484h-.6z"/><path d="M309.200 442h1.600L310.500 498h-.6z"/><path d="M344.700 450h1.600L343 506h-.6z"/><path d="M378.700 439h1.600L375.500 495h-.6z"/><path d="M409.200 428h1.600L404 482h-.6z"/><path d="M437.200 417h1.600L431 470h-.6z"/><path d="M462.700 406h1.600L455 459h-.6z"/><path d="M486.200 395h1.600L477.500 447h-.6z"/><path d="M506.200 383h1.600L497.500 434h-.6z"/><path d="M516.700 371h1.600L507.500 418h-.6z"/><path d="M512.700 355h1.600L503.500 403h-.6z"/><path d="M504.200 341h1.600L496.500 388h-.6z"/><path d="M489.700 329h1.600L481.500 374h-.6z"/><path d="M460.700 325h1.600L454.500 376h-.6z"/><path d="M433.200 321h1.600L428.500 366h-.6z"/><path d="M406.200 317h1.600L402.500 363h-.6z"/><path d="M379.200 315h1.600L378 359h-.6z"/><path d="M353.200 313h1.600L353 357h-.6z"/><path d="M331.200 317h1.600L331.500 360h-.6z"/><path d="M326.200 329h1.600L327 373h-.6z"/><path d="M336.200 340h1.600L336 387h-.6z"/><path d="M363.200 345h1.600L362.500 391h-.6z"/><path d="M392.700 347h1.600L390 394h-.6z"/></g>
          <path class="crv" d="M400.500 265 379.500 265 358 265 337 265 315.500 264.500 300 269.500 283.500 275 266 281 248.500 287 231 294 215 302 197 310.500 179 320 160 330 143 342.500 151 354.500 167 365 185.500 376.500 205.500 388.500 228 401 252 414.500 279.500 428.500 310 442.500 345.500 450 379.500 439.500 410 428.500 438 417.500 463.500 406.500 487 395 507 383.500 517.500 371 513.500 355 505 341 490.500 329 461.500 325 434 321 407 317.500 380 315 354 313.500 332 317 327 329 337 340.500 364 345 393.500 347"/>
        </svg>
        <div class="cams"><span>Persp<i class="down"></i></span><span>No cam<i class="down"></i></span></div>
        <p class="hint">Left mouse tumbles. Middle pans. Right dollies. Ctrl+Alt+Left box-zooms. Ctrl+Right zooms. Spacebar-Ctrl-Left tilts. Hold L for<br>alternate tumble, dolly, and zoom. &nbsp;&nbsp; M or Alt+M for First Person Navigation.</p>
      </div>
      <aside class="toolcol right-tools">
        <div class="colhead">▶</div>
        <svg class="active first"><use href="#cplane"/></svg><svg><use href="#green"/></svg><svg><use href="#padlock"/></svg><svg><use href="#bulbx"/></svg><svg><use href="#shade"/></svg><svg class="active"><use href="#bulbw"/></svg><svg><use href="#bulbp"/></svg><svg><use href="#bulbs"/></svg><svg class="active"><use href="#checker"/></svg><svg><use href="#eye"/></svg><svg><use href="#eyep"/></svg><hr><svg class="active"><use href="#dot"/></svg><svg class="active"><use href="#vec"/></svg><svg><use href="#vec2"/></svg><svg><use href="#num"/></svg><svg><use href="#face"/></svg><svg><use href="#facenum"/></svg><i class="tri">▼</i>
      </aside>
    </div>
  </section>
  <div class="edge mid"><i class="dots"></i></div>
  <section class="right">
    <div class="pane">
      <nav class="tabs param-tabs"><span class="on it">polyframe1<i>×</i></span><span>Take List<i>×</i></span><span>Performance Monitor<i>×</i></span><b class="plus"></b><u></u><b class="down"></b></nav>
      <div class="pathbar">
        <svg class="nav"><use href="#back"/></svg><svg class="nav"><use href="#fwd"/></svg>
        <div class="path"><svg><use href="#clap"/></svg>obj<i class="chev"></i><svg><use href="#obj"/></svg>curve_object1<em>▼</em></div>
        <svg class="i17"><use href="#pin"/></svg><svg class="i19"><use href="#target"/></svg>
      </div>
      <div class="opbar"><svg><use href="#poly"/></svg><strong>PolyFrame</strong><div class="opname">polyframe1</div><svg class="lt"><use href="#gear"/></svg><svg><use href="#hou"/></svg><svg><use href="#search"/></svg><svg><use href="#info"/></svg><svg><use href="#help"/></svg></div>
      <div class="params">
        <div class="row r-group"><i></i><label>Group</label><div class="field short"></div><em class="drop">▼</em><svg><use href="#cursor"/></svg></div>
        <div class="row r-entity"><i></i><label>Entity</label><div class="combo c1">Primitives<em><s></s><s></s></em></div></div>
        <div class="row r-style"><i></i><label>Style</label><div class="combo c2">Two Edges<em><s></s><s></s></em></div></div>
        <div class="row r-attr off"><i></i><label>Attribute Name</label><div class="field"></div></div>
        <div class="row r-name"><i class="chk">✔</i><label>Normal Name</label><div class="field">N</div></div>
        <div class="row r-name"><i class="chk">✔</i><label>Tangent Name</label><div class="field">tangentu</div></div>
        <div class="row r-name off"><i class="chk"></i><label>Bitangent Name</label><div class="field">tangentv</div></div>
        <div class="row r-check"><i class="chk"></i><span>Make Frame Orthogonal</span></div>
        <div class="row r-check off"><i class="chk"></i><span>Left-Handed Frame</span></div>
      </div>
    </div>
    <div class="split"><i class="dots"></i></div>
    <div class="pane net">
      <nav class="tabs net-tabs"><span class="on it">/obj/curve_object1<i>×</i></span><span>Tree View<i>×</i></span><span>Material Palette<i>×</i></span><span>Asset Browser<i>×</i></span><b class="plus"></b><u></u><b class="down"></b></nav>
      <div class="pathbar">
        <svg class="nav"><use href="#back"/></svg><svg class="nav"><use href="#fwd"/></svg>
        <div class="path"><svg><use href="#clap"/></svg>obj<i class="chev"></i><svg><use href="#obj"/></svg>curve_object1<em>▼</em></div>
        <svg class="i17"><use href="#pin"/></svg><svg class="i19"><use href="#target"/></svg>
      </div>
      <div class="netmenu"><div class="collapse">▲</div><nav><span>Add</span><span>Edit</span><span>Go</span><span>View</span><span>Tools</span><span>Layout</span><span>Labs</span><span>Help</span></nav>
        <div class="neticons"><svg><use href="#tools"/></svg><svg><use href="#tree"/></svg><svg><use href="#list"/></svg><svg><use href="#palette"/></svg><svg><use href="#flags"/></svg><svg><use href="#layout"/></svg><svg><use href="#note"/></svg><svg><use href="#image"/></svg><svg><use href="#crate"/></svg><svg><use href="#search"/></svg><svg><use href="#eyebox"/></svg></div>
      </div>
      <svg class="graph" viewBox="602 395 678 187">
        <text x="1271" y="425" text-anchor="end" class="geo-title">Geometry</text>
        <circle cx="843" cy="510" r="24.500" fill="#456a9e"/><circle cx="843" cy="510" r="16.500" fill="#9575cd"/>
        <path d="M842.500 418v32" stroke="#46658c"/><path d="M842.500 473v26" stroke="#76804c"/>
        <g fill="#b9b9b9"><circle cx="843" cy="395" r="2.500"/><circle cx="843" cy="418" r="2.600"/><circle cx="843" cy="450" r="2.600"/><circle cx="843" cy="473" r="2.600"/><circle cx="843" cy="498.500" r="2.600"/><circle cx="843" cy="521.500" r="2.600"/></g>
        <g fill="#cfcfcf"><rect x="818" y="399" width="49.500" height="15.500" rx="2.500"/><rect x="818" y="453.500" width="49.500" height="15.500" rx="2.500"/><rect x="817.500" y="501.500" width="51" height="17" rx="3" stroke="#191919" stroke-width="3"/></g>
        <path d="M861 502.500h6v15h-7z" fill="#00a9ee"/>
        <rect x="817.500" y="501.500" width="51" height="17" rx="3" fill="none" stroke="#edcd1f" stroke-width="1.600"/>
        <path d="M825 400l-1.500 14M832 400l-1.500 14M854 400l1.500 14M861 400l1.500 14M825 454.500l-1.500 14M832 454.500l-1.500 14M854 454.500l1.500 14M861 454.500l1.500 14M825 503l-1.500 14M832 503l-1.500 14M854 503l1.500 14" stroke="#777"/>
        <use href="#curve" x="837" y="401" width="12" height="12"/>
        <path d="M837 459c3-4 4 2 7 0s3 0 5 1M837 465c3-4 4 2 7 0s3 0 5 1" fill="none" stroke="#9b6a70" stroke-width="1.200"/>
        <use href="#poly" x="837" y="504" width="12" height="12"/>
        <path d="M875 417h6v4.500h-6z" fill="#5b6962"/><path d="M876.300 417v-1.500q1.700-2 3.400 0v1.500" fill="none" stroke="#5b6962"/>
        <g class="node-label"><text x="872" y="410">curve1</text><text x="872" y="465">resample1</text><text x="872" y="513.500">polyframe1</text></g>
      </svg>
    </div>
  </section>
</main>

<footer class="playbar">
  <div class="pb-edge"></div>
  <div class="btns">
    <svg viewBox="0 0 23 16"><path d="M4 6v9M12 6v9l-7-4.500zM20 6v9l-7-4.500z"/></svg><svg viewBox="0 0 23 16"><path d="M16 5v11l-9-5.500z"/></svg><svg class="active" viewBox="0 0 23 16"><path d="M6 5h11v11H6z"/></svg><svg viewBox="0 0 23 16"><path d="M7 5v11l9-5.500z"/></svg><svg viewBox="0 0 23 16"><path d="M3 6v9l7-4.500zM11 6v9l7-4.500zM19 6v9"/></svg>
  </div>
  <div class="frame">1</div>
  <div class="steps"><svg viewBox="0 0 11 16"><path d="M7 8v7l-4-3.500zM9 8v7"/></svg><svg viewBox="0 0 11 16"><path d="M4 8v7l4-3.500zM2 8v7"/></svg></div>
  <svg class="timeline" viewBox="192 584 900 22">
    <g class="tick-label"><text x="282" y="593">24</text><text x="370" y="593">48</text><text x="458.500" y="593">72</text><text x="546.500" y="593">96</text><text x="636.500" y="593">120</text><text x="724.500" y="593">144</text><text x="812.500" y="593">168</text><text x="900.500" y="593">192</text><text x="988.500" y="593">216</text><text x="1072" y="593">2</text></g>
    <path d="M192 602.500h881" stroke="#858585"/>
    <path d="M211 602.500h860" stroke="#7a7a7a" stroke-width="7" stroke-dasharray="1 21"/>
    <path d="M277 601h796" stroke="#8a8a8a" stroke-width="9" stroke-dasharray="1 87"/>
    <path d="M194.500 585.500h19v12.500h-15l-4 4z" fill="#0b0b0b" stroke="#d8d8d8"/>
    <text x="203.500" y="596" class="now">1</text>
  </svg>
  <div class="dial"></div>
  <div class="keybtn"><svg><use href="#key"/></svg></div>
  <div class="keys">0 keys, 0/0 channels<i>▲</i></div>
</footer>

<div class="notes">
  <p>点法线，起初点没有法线，我们添加一个<b>polyfram</b>节点，<br>为其添加法线。</p>
  <svg viewBox="0 0 1280 606"><g fill="#fe0000"><path d="M486 190 488 194 570.500 456 575 455 573 467 564 459 566.500 457.500z"/><path d="M491 412 503 409 502.500 412.500 806 506.500 805 507 501.500 418 501 421z"/><path d="M737 443 809 497 812 494.500 814 505.500 802 504.500 805.500 501.500z"/></g></svg>
</div>
</body>
</html>
```
FILE: styles.css
```css
* { box-sizing: border-box; }
body {
  margin: 0;
  width: 1280px;
  height: 606px;
  overflow: hidden;
  display: flex;
  flex-direction: column;
  position: relative;
  background: #2e2e2e;
  color: #c4c4c4;
  font: 8.7px/1 "Noto Sans CJK SC", "Noto Sans", sans-serif;
}
i, em { font-style: normal; }
svg { display: block; flex: none; overflow: visible; }
.sprite { position: absolute; }

/* menu bar */
.menubar { height: 9px; display: flex; padding-left: 13px; background: #373737; font-size: 10.200px; line-height: 9px; overflow: hidden; border-bottom: 1px solid #242424; }
.menubar > span { margin-top: -6px; margin-right: 8px; }
.desk { display: flex; height: 5px; gap: 5px; background: #424242; }
.desk b { font-weight: 400; margin-top: -6px; }
.desk em.down { margin: 0 5px 0 auto; border-top-color: #888; }
.desk-a { width: 120px; margin-left: 12px; padding-left: 5px; }
.desk-b { width: 106px; margin-left: 3px; padding-left: 6px; }
.desk-c { width: 141px; margin-left: 664px; padding-left: 6px; }
.desk-icon { width: 11px; height: 4px; border: solid #aaa; border-width: 0 1px 1px; }
.ring { width: 9px; height: 4px; border: 1px solid #aaa; border-top: 0; border-radius: 0 0 5px 5px; }
.help-ring { margin-left: 8px; width: 11px; }
.slab { width: 13px; height: 4px; background: #222; }

/* shelves */
.shelves { height: 50px; display: grid; grid-template-columns: 601px 679px; }
.shelf { display: flex; min-width: 0; background: #3d3d3d; border-left: 2px solid #202020; }
.collapse { width: 7px; background: linear-gradient(90deg, #4b4b4b, #363636); border-right: 1px solid #1c1c1c; color: #000; font-size: 6px; line-height: 9px; text-align: center; flex: none; }
.shelf-main { flex: 1; min-width: 0; display: flex; flex-direction: column; }
.shelf-tabs { display: grid; height: 16px; background: #242424; font-size: 7.400px; line-height: 16px; flex: none; }
.shelf-tabs span { background: linear-gradient(#3a3a3a, #2d2d2d); border-right: 2px solid #1b1b1b; border-bottom: 1px solid #1b1b1b; text-align: center; white-space: nowrap; color: #b0b0b0; }
.shelf-tabs .on { background: #474747; border-bottom: 0; }
.shelf-tabs > b { display: flex; gap: 9px; align-items: center; justify-content: flex-end; padding-right: 5px; background: #2f2f2f; }
.tabs-left { grid-template-columns: 34px 37px 32px 37px 37px 37px 36px 38px 39px 37px 37px 35px 38px 37px 37px 1fr; }
.tabs-right { grid-template-columns: 75px 45px 40px 35px 35px 54px 59px 59px 38px 38px 26px 32px 37px 68px 1fr; }
.plus { width: 9px; height: 9px; background: linear-gradient(#ddd, #ddd) center/9px 2px no-repeat, linear-gradient(#ddd, #ddd) center/2px 9px no-repeat; }
.down { width: 0; height: 0; border: 3px solid transparent; border-top: 5px solid #d0d0d0; border-bottom: 0; }
.shelf-tools { flex: 1; display: grid; background: linear-gradient(#484848, #353535); border-bottom: 1px solid #252525; font-size: 7.400px; }
.shelf-tools a { display: flex; flex-direction: column; align-items: center; padding-top: 1.500px; white-space: nowrap; line-height: 8px; color: #b8b8b8; text-align: center; }
.shelf-tools svg { width: 19px; height: 19px; margin-bottom: 2px; }
.shelf-tools .two { line-height: 7.300px; font-size: 7.200px; }
.shelf-tools .two svg { width: 17px; height: 17px; margin-bottom: 0; }
.more { color: #868686; font-size: 8px; line-height: 34px; }
.tools-left { padding-left: 13.500px; grid-template-columns: 35.500px 35px 35.500px 35px 35.500px 35.500px 35.500px 35.500px 35px 45px 35px 46.500px 34px 58px 23px 1fr; }
.tools-right { padding-left: 10px; grid-template-columns: 40px 41px 42px 41px 55px 51px 50px 56px 37px 36px 48px 48px 52px 58px 1fr; }
.shelf-grip { width: 7px; background: #444; border-left: 1px solid #252525; display: flex; align-items: center; justify-content: center; }
.dots { width: 4px; height: 14px; background: repeating-conic-gradient(#686868 0 25%, #383838 0 50%) 0 0/3px 3px; flex: none; }

/* panes */
.work { height: 523px; display: grid; grid-template-columns: 5px 593px 5px 677px; background: #242424; }
.edge { background: #383838; display: flex; align-items: center; justify-content: center; border-right: 1px solid #262626; }
.edge.mid { background: #434343; border-left: 1px solid #1d1d1d; }
.pane { display: flex; flex-direction: column; background: #3a3a3a; min-width: 0; }
.right { display: flex; flex-direction: column; }
.tabs { display: grid; height: 17px; padding-top: 1px; background: #2c2c2c; line-height: 16px; font-size: 8.050px; align-items: stretch; flex: none; }
.tabs span { display: flex; justify-content: space-between; padding: 0 3px 0 5px; white-space: nowrap; border-right: 2px solid #202020; background: #303030; color: #c6c6c6; }
.tabs .on { background: #464646; }
.tabs span i { font: 700 8px/16px "DejaVu Sans", sans-serif; }
.tabs .it { font-style: italic; }
.tabs u { width: 10px; height: 8px; background: #d6d6d2; align-self: center; justify-self: end; }
.tabs .plus, .tabs .down { align-self: center; justify-self: center; }
.scene-tabs { grid-template-columns: 70px 88px 73px 85px 82px 107px 24px 45px 19px; }
.param-tabs { grid-template-columns: 70px 63px 102px 22px 1fr 18px; }
.net-tabs { grid-template-columns: 95px 66px 83px 79px 22px 1fr 18px; }
.pathbar { height: 31px; display: flex; align-items: center; background: linear-gradient(#484848, #383838); border-bottom: 1px solid #1a1a1a; flex: none; padding: 0 3px 0 5px; }
.nav { width: 17px; height: 17px; margin-right: 6px; }
.path { flex: 1; height: 20px; margin-left: 1px; display: flex; align-items: center; background: linear-gradient(#363636, #404040); border: 1px solid #171717; padding-left: 3px; font-size: 8.800px; color: #cfcfcf; }
.path svg { width: 16px; height: 16px; margin-right: 2px; }
.path em { width: 12px; height: 18px; margin-left: auto; background: #2e2e2e; color: #888; font-size: 6px; line-height: 18px; text-align: center; }
.chev { width: 12px; height: 12px; border: solid #1f1f1f; border-width: 1px 1px 0 0; transform: rotate(45deg) skew(12deg, 12deg); margin: 0 6px 0 -4px; }
.i17 { width: 17px; height: 17px; margin-left: 8px; }
.i19 { width: 19px; height: 19px; margin-left: 5px; }
.i19.gap { margin-left: 13px; }
.white { width: 17px; height: 17px; background: #d6d6d2; margin-left: 6px; }

.viewbar { height: 26px; display: flex; align-items: center; background: #2f2f2f; border-bottom: 1px solid #181818; border-top: 1px solid #555; flex: none; }
.viewbar .collapse { align-self: stretch; width: 9px; }
.viewbar strong { font-size: 9.300px; margin-left: 2px; color: #ddd; }
.viewbar .i19 { margin-left: 3px; }
.vb-tools { display: grid; grid-template-columns: repeat(3, 30.500px) 29px 23px 33px 27px 24px; justify-items: center; align-items: center; margin-left: 131px; }
.vb-tools svg { width: 18px; height: 18px; }
.vb-tools .active { width: 21px; height: 22px; padding: 2px; }
.vb-tools .ne { margin-left: 2px; }
.vb-end { display: flex; gap: 7px; margin-left: auto; padding-right: 5px; }
.vb-end svg { width: 17px; height: 17px; }
.active { background: #5d7894; }
.view-area { height: 449px; display: grid; grid-template-columns: 31px 537px 25px; }
.toolcol { background: #3a3a3a; display: flex; flex-direction: column; align-items: center; overflow: hidden; }
.colhead { width: 100%; height: 8px; background: linear-gradient(#4f4f4f, #393939); border-bottom: 1px solid #222; color: #000; font-size: 6px; line-height: 8px; padding-left: 2px; flex: none; }
.seltypes { width: 24px; margin: 4px 0 26px; background: #4b4b4b; border: 1px solid #232323; flex: none; }
.seltypes svg { width: 22px; height: 23px; padding: 2px; }
.left-tools > svg { width: 19px; height: 19px; margin-bottom: 7.200px; }
.left-tools > .t-cursor { width: 20px; height: 20px; margin-bottom: 5px; }
.left-tools > .t-lock { width: 24px; height: 25px; padding: 3px; margin-bottom: 3px; }
.toolcol hr { width: 26px; border: 0; border-top: 1px solid #5c5c5c; margin: 0 0 6px; flex: none; }
.left-tools > .snap { margin-bottom: 5.600px; }
.left-tools > .half { height: 9px; margin-bottom: 2px; }
.tri { color: #8a8a8a; font-size: 6px; line-height: 8px; flex: none; }
.left-tools > .t-hand { margin-top: 4px; margin-bottom: 5px; }
.right-tools .colhead { text-align: right; padding-right: 2px; }
.right-tools svg { width: 21px; height: 23px; padding: 2.500px 2px; margin-bottom: .75px; }
.right-tools .first { margin-top: 16px; }
.right-tools hr { margin: 3px 0 3px; }
.icon-num { font: 700 10.500px "Noto Sans CJK SC", sans-serif; fill: #e0e0e0; }

.viewport { position: relative; overflow: hidden; background: linear-gradient(#6b8391, #7d939e 35%, #98a8ae 62%, #bfc8c7); }
.scene { width: 537px; height: 449px; overflow: hidden; }
.crv { fill: none; stroke: #eef2f2; stroke-width: 1.2; marker: url(#pt); }
.cams { position: absolute; top: 5px; right: 5px; display: flex; gap: 5px; }
.cams span { height: 16px; padding: 0 5px 0 6px; display: flex; align-items: center; gap: 2px; border: 1px solid #a9b4ba; border-radius: 8px; background: #62727a; color: #fff; font-size: 8.800px; line-height: 14px; }
.cams .down { border-width: 3px 2.500px 0; }
.hint { position: absolute; inset: auto 0 0; height: 34px; margin: 0; padding: 3px 6px; background: rgba(205, 211, 210, .5); color: #1d2224; font-size: 8.840px; line-height: 12.700px; white-space: nowrap; }

/* parameters */
.opbar { height: 26px; display: flex; align-items: center; background: #3a3a3a; border-bottom: 2px solid #161616; padding-left: 5px; }
.opbar svg { width: 17px; height: 17px; margin-right: 6.500px; }
.opbar > svg:first-child { margin-right: 3px; }
.opbar strong { font-size: 9px; color: #ddd; width: 50px; }
.opname { flex: 1; height: 18px; background: #131313; font: 10px/19px "DejaVu Sans Mono", monospace; color: #d8d8d8; padding-left: 3px; margin-right: 2px; }
.lt { color: #d8d8d8; }
.params { height: 186px; padding-top: 4px; }
.row { display: grid; grid-template-columns: 15px 12px 89px 11px 541px; align-items: center; }
.row label { grid-column: 3; text-align: right; font-size: 8.700px; white-space: nowrap; justify-self: end; }
.row > i { grid-column: 2; }
.field { grid-column: 5; height: 17px; background: #131313; border-bottom: 1px solid #4b4b4b; font: 10px/17px "DejaVu Sans Mono", monospace; padding-left: 3px; color: #d8d8d8; }
.chk { width: 12px; height: 11px; background: #131313; color: #fff; font: 11px/10px "DejaVu Sans", sans-serif; text-align: center; }
.r-group { height: 18px; grid-template-columns: 15px 12px 89px 11px 499px 20px 1fr; }
.drop { width: 15px; height: 16px; margin-left: 2px; background: #303030; color: #888; font-size: 6px; line-height: 16px; text-align: center; }
.r-group svg { width: 17px; height: 16px; margin-left: 1px; }
.r-entity { height: 26px; }
.r-style { height: 18px; }
.combo { grid-column: 5; height: 18px; display: flex; justify-content: space-between; background: linear-gradient(#525252, #454545); border: 1px solid #202020; border-width: 0 1px 1px 0; font-size: 8.700px; line-height: 17px; padding-left: 12px; }
.combo em { width: 14px; background: #303030; display: flex; flex-direction: column; justify-content: center; align-items: center; gap: 2px; }
.combo s { border: 2.500px solid transparent; border-bottom: 4px solid #999; border-top: 0; }
.combo s + s { transform: rotate(180deg); }
.c1 { width: 76px; }
.c2 { width: 117px; }
.r-attr { height: 22px; }
.r-name { height: 19.200px; }
.r-check { height: 16.700px; grid-template-columns: 127px 12px 1fr; }
.r-check span { grid-column: 3; padding-left: 5px; font-size: 8.800px; }
.off { color: #737373; }
.off .field { background: #343434; color: #4d4d4d; border-color: #303030; }
.r-check.off .chk { background: #343434; }
.split { height: 5px; background: #4a4a4a; display: flex; justify-content: center; align-items: center; border-top: 1px solid #2a2a2a; flex: none; }
.split .dots { width: 16px; height: 3px; }

/* network editor */
.net { flex: 1; }
.net .pathbar { height: 30px; }
.netmenu { height: 24px; display: flex; align-items: center; border-bottom: 1px solid #151515; background: #3a3a3a; flex: none; }
.netmenu .collapse { align-self: stretch; width: 9px; }
.netmenu nav { display: flex; gap: 11.700px; padding: 1px 0 0 6px; font-size: 9.600px; }
.neticons { display: grid; grid-template-columns: 24px 23px 36px 24px 37px 23px 23px 24px 36px 24px 18px; margin-left: auto; padding-right: 3px; }
.neticons svg { width: 17px; height: 17px; }
.graph { width: 678px; height: 187px; margin-left: -1px; background: #2f2f2f; overflow: hidden; }
.geo-title { font-size: 18.700px; font-weight: 700; fill: #515151; }
.node-label { font-size: 9.600px; fill: #bdbdbd; }

/* playbar */
.playbar { height: 24px; display: flex; align-items: flex-end; background: #2e2e2e; border-top: 1px solid #606060; flex: none; }
.pb-edge { width: 8px; height: 23px; background: #444; border-right: 1px solid #1d1d1d; }
.btns { display: flex; margin-left: 4px; gap: 1px; }
.btns svg { width: 22px; height: 16px; background: #444; fill: #d8d8d4; stroke: #d8d8d4; stroke-width: 1px; overflow: hidden; }
.btns .active { background: #5d7894; }
.frame { width: 37px; height: 16px; margin-left: 2px; background: #121212; font: 10px/22px "DejaVu Sans Mono", monospace; padding-left: 2px; overflow: hidden; color: #ddd; }
.steps { display: flex; gap: 1px; margin: 0 1px 0 2px; }
.steps svg { width: 11px; height: 16px; background: #444; fill: #d0d0d0; stroke: #d0d0d0; stroke-width: .8px; }
.timeline { width: 900px; height: 22px; margin-right: -15px; }
.tick-label { font-size: 8.400px; fill: #a0a0a0; text-anchor: middle; }
.now { font-size: 10px; fill: #fff; text-anchor: middle; }
.dial { width: 30px; height: 10px; border-radius: 15px 15px 0 0; background: #292929; border: 1px solid #222; border-bottom: 0; }
.keybtn { width: 19px; height: 15px; margin-left: 19px; background: #424242; padding: 2px; overflow: hidden; }
.keybtn svg { width: 15px; height: 15px; }
.keys { width: 127px; height: 15px; margin-left: 4px; background: linear-gradient(#555, #464646); display: flex; padding: 0 5px 0 14px; font-size: 8.800px; line-height: 19px; white-space: nowrap; overflow: hidden; }
.keys i { margin-left: auto; color: #888; font-size: 7px; }

/* annotations drawn over the whole window */
.notes { position: absolute; inset: 0; pointer-events: none; }
.notes p { position: absolute; left: 80px; top: 161px; margin: 0; color: #fe0000; font-size: 19.300px; font-weight: 300; line-height: 22.500px; white-space: nowrap; }
.notes b { font: 400 19.300px/0 "Liberation Sans", sans-serif; }
.notes svg { width: 1280px; height: 606px; }
```
